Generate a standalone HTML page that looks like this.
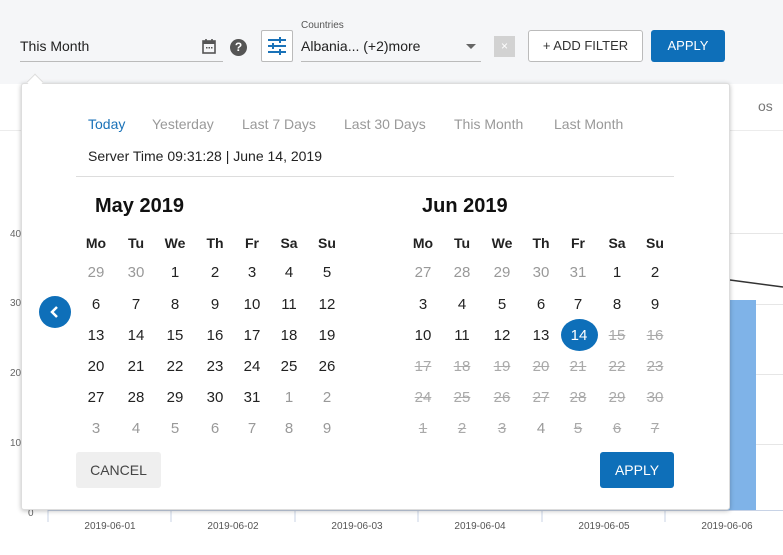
<!DOCTYPE html>
<html><head><style>
*{box-sizing:border-box;margin:0;padding:0}
body{width:783px;height:555px;overflow:hidden;background:#fff;font-family:"Liberation Sans",sans-serif;position:relative;color:#222}
.a{position:absolute}
.top{left:0;top:0;width:783px;height:84px;background:#f5f6f8}
.pop{left:21px;top:83px;width:709px;height:427px;background:#fff;border:1px solid #ddd;border-radius:3px;box-shadow:0 1px 5px rgba(0,0,0,.25)}
.d{position:absolute;width:36px;text-align:center;font-size:15px;transform:translateX(-18px);line-height:18px}
.g{color:#999}
.s{color:#aaa;text-decoration:line-through}
.h{font-weight:bold;font-size:14px}
.gl{position:absolute;height:1px;background:#e6e6e6}
.yl{position:absolute;font-size:10px;color:#666}
.xl{position:absolute;font-size:10px;color:#555;width:80px;text-align:center}
</style></head><body>
<div class="a top"></div>
<!-- chart background -->
<div class="gl" style="left:0;top:130px;width:783px;background:#ececec"></div>
<div class="gl" style="left:40px;top:233px;width:743px"></div>
<div class="gl" style="left:40px;top:304px;width:743px"></div>
<div class="gl" style="left:40px;top:374px;width:743px"></div>
<div class="gl" style="left:40px;top:444px;width:743px"></div>
<div class="yl" style="left:10px;top:229px">40</div>
<div class="yl" style="left:10px;top:298px">30</div>
<div class="yl" style="left:10px;top:368px">20</div>
<div class="yl" style="left:10px;top:438px">10</div>
<div class="yl" style="left:28px;top:508px">0</div>
<div class="a" style="left:758px;top:98px;font-size:14px;color:#777">os</div>
<div class="a" style="left:81px;top:500px;width:59px;height:10px;background:#6a9fd8"></div>
<div class="a" style="left:204px;top:500px;width:59px;height:10px;background:#6a9fd8"></div>
<div class="a" style="left:327px;top:500px;width:59px;height:10px;background:#6a9fd8"></div>
<div class="a" style="left:450px;top:500px;width:59px;height:10px;background:#6a9fd8"></div>
<div class="a" style="left:574px;top:500px;width:59px;height:10px;background:#6a9fd8"></div>
<div class="a" style="left:698px;top:300px;width:58px;height:210px;background:#7fb3e8"></div>
<div class="a" style="left:48px;top:510px;width:735px;height:1px;background:#c8d3e6"></div>
<svg class="a" style="left:0;top:0" width="783" height="555"><line x1="730" y1="280" x2="783" y2="287" stroke="#333" stroke-width="1.5"/>
<g stroke="#c8d3e6"><line x1="48" y1="510" x2="48" y2="522"/><line x1="171" y1="510" x2="171" y2="522"/><line x1="295" y1="510" x2="295" y2="522"/><line x1="418" y1="510" x2="418" y2="522"/><line x1="542" y1="510" x2="542" y2="522"/><line x1="665" y1="510" x2="665" y2="522"/></g></svg>
<div class="xl" style="left:70px;top:521px">2019-06-01</div>
<div class="xl" style="left:193px;top:521px">2019-06-02</div>
<div class="xl" style="left:317px;top:521px">2019-06-03</div>
<div class="xl" style="left:440px;top:521px">2019-06-04</div>
<div class="xl" style="left:564px;top:521px">2019-06-05</div>
<div class="xl" style="left:687px;top:521px">2019-06-06</div>

<!-- top bar -->
<div class="a" style="left:20px;top:38px;font-size:14px;color:#222">This Month</div>
<div class="a" style="left:20px;top:61px;width:203px;height:1px;background:#bbb"></div>
<svg class="a" style="left:201px;top:38px" width="16" height="17" viewBox="0 0 16 17"><rect x="2" y="3" width="12" height="12" fill="none" stroke="#555" stroke-width="1.6"/><rect x="2" y="3" width="12" height="3" fill="#555"/><line x1="5" y1="1" x2="5" y2="4" stroke="#555" stroke-width="1.6"/><line x1="11" y1="1" x2="11" y2="4" stroke="#555" stroke-width="1.6"/><rect x="5" y="9" width="1.5" height="1.5" fill="#555"/><rect x="7.5" y="9" width="1.5" height="1.5" fill="#555"/><rect x="10" y="9" width="1.5" height="1.5" fill="#555"/></svg>
<div class="a" style="left:230px;top:39px;width:17px;height:17px;border-radius:50%;background:#555;color:#fff;font-size:12px;font-weight:bold;text-align:center;line-height:17px">?</div>
<div class="a" style="left:261px;top:30px;width:32px;height:32px;border:1px solid #bbb;background:#fff;border-radius:2px"></div>
<svg class="a" style="left:267px;top:36px" width="20" height="20" viewBox="0 0 20 20" fill="#1a72b8"><rect x="1" y="3" width="18" height="2"/><rect x="12" y="1" width="2" height="6"/><rect x="1" y="9" width="18" height="2"/><rect x="5" y="7" width="2" height="6"/><rect x="1" y="15" width="18" height="2"/><rect x="12" y="13" width="2" height="6"/></svg>
<div class="a" style="left:301px;top:20px;font-size:10px;color:#555">Countries</div>
<div class="a" style="left:301px;top:38px;font-size:14px;color:#222">Albania... (+2)more</div>
<div class="a" style="left:466px;top:44px;width:0;height:0;border-left:5px solid transparent;border-right:5px solid transparent;border-top:5px solid #666"></div>
<div class="a" style="left:301px;top:61px;width:180px;height:1px;background:#bbb"></div>
<div class="a" style="left:494px;top:36px;width:21px;height:21px;background:#d2d2d2;color:#fff;font-size:12px;text-align:center;line-height:21px">×</div>
<div class="a" style="left:528px;top:30px;width:115px;height:32px;border:1px solid #bbb;border-radius:3px;background:#fff;font-size:13px;text-align:center;line-height:30px;color:#333">+ ADD FILTER</div>
<div class="a" style="left:651px;top:30px;width:74px;height:32px;background:#0e6fb9;border-radius:3px;color:#fff;font-size:13px;text-align:center;line-height:32px">APPLY</div>

<!-- popup -->
<div class="a pop"></div>
<div class="a" style="left:29px;top:76px;width:12px;height:12px;background:#fff;border-left:1px solid #ddd;border-top:1px solid #ddd;transform:rotate(45deg)"></div>
<div class="a" style="left:88px;top:116px;font-size:14px;color:#1a72b8">Today</div>
<div class="a" style="left:152px;top:116px;font-size:14px;color:#999">Yesterday</div>
<div class="a" style="left:242px;top:116px;font-size:14px;color:#999">Last 7 Days</div>
<div class="a" style="left:344px;top:116px;font-size:14px;color:#999">Last 30 Days</div>
<div class="a" style="left:454px;top:116px;font-size:14px;color:#999">This Month</div>
<div class="a" style="left:554px;top:116px;font-size:14px;color:#999">Last Month</div>
<div class="a" style="left:88px;top:148px;font-size:14px;color:#222">Server Time 09:31:28 | June 14, 2019</div>
<div class="a" style="left:76px;top:176px;width:598px;height:1px;background:#ddd"></div>
<div class="a" style="left:95px;top:195px;font-size:20px;font-weight:bold;color:#111">May 2019</div>
<div class="a" style="left:422px;top:195px;font-size:20px;font-weight:bold;color:#111">Jun 2019</div>
<div class="a" style="left:39px;top:296px;width:32px;height:32px;border-radius:50%;background:#0e6fb9"></div>
<svg class="a" style="left:47px;top:304px" width="16" height="16"><path d="M10 3 L5 8 L10 13" fill="none" stroke="#fff" stroke-width="2.5"/></svg>
<div class="a" style="left:561px;top:319px;width:37px;height:32px;border-radius:50%;background:#0e6fb9"></div>
<div id="cal"></div>
<div class="a" style="left:76px;top:452px;width:85px;height:36px;background:#efefef;border-radius:3px;color:#444;font-size:14px;text-align:center;line-height:36px">CANCEL</div>
<div class="a" style="left:600px;top:452px;width:74px;height:36px;background:#0e6fb9;border-radius:3px;color:#fff;font-size:14px;text-align:center;line-height:36px">APPLY</div>

<!-- May -->
<div class="d h" style="left:96px;top:234px">Mo</div><div class="d h" style="left:136px;top:234px">Tu</div><div class="d h" style="left:175px;top:234px">We</div><div class="d h" style="left:215px;top:234px">Th</div><div class="d h" style="left:252px;top:234px">Fr</div><div class="d h" style="left:289px;top:234px">Sa</div><div class="d h" style="left:327px;top:234px">Su</div>
<div class="d g" style="left:96px;top:264px">29</div><div class="d g" style="left:136px;top:264px">30</div><div class="d" style="left:175px;top:264px">1</div><div class="d" style="left:215px;top:264px">2</div><div class="d" style="left:252px;top:264px">3</div><div class="d" style="left:289px;top:264px">4</div><div class="d" style="left:327px;top:264px">5</div>
<div class="d" style="left:96px;top:296px">6</div><div class="d" style="left:136px;top:296px">7</div><div class="d" style="left:175px;top:296px">8</div><div class="d" style="left:215px;top:296px">9</div><div class="d" style="left:252px;top:296px">10</div><div class="d" style="left:289px;top:296px">11</div><div class="d" style="left:327px;top:296px">12</div>
<div class="d" style="left:96px;top:327px">13</div><div class="d" style="left:136px;top:327px">14</div><div class="d" style="left:175px;top:327px">15</div><div class="d" style="left:215px;top:327px">16</div><div class="d" style="left:252px;top:327px">17</div><div class="d" style="left:289px;top:327px">18</div><div class="d" style="left:327px;top:327px">19</div>
<div class="d" style="left:96px;top:358px">20</div><div class="d" style="left:136px;top:358px">21</div><div class="d" style="left:175px;top:358px">22</div><div class="d" style="left:215px;top:358px">23</div><div class="d" style="left:252px;top:358px">24</div><div class="d" style="left:289px;top:358px">25</div><div class="d" style="left:327px;top:358px">26</div>
<div class="d" style="left:96px;top:389px">27</div><div class="d" style="left:136px;top:389px">28</div><div class="d" style="left:175px;top:389px">29</div><div class="d" style="left:215px;top:389px">30</div><div class="d" style="left:252px;top:389px">31</div><div class="d g" style="left:289px;top:389px">1</div><div class="d g" style="left:327px;top:389px">2</div>
<div class="d g" style="left:96px;top:420px">3</div><div class="d g" style="left:136px;top:420px">4</div><div class="d g" style="left:175px;top:420px">5</div><div class="d g" style="left:215px;top:420px">6</div><div class="d g" style="left:252px;top:420px">7</div><div class="d g" style="left:289px;top:420px">8</div><div class="d g" style="left:327px;top:420px">9</div>
<!-- Jun -->
<div class="d h" style="left:423px;top:234px">Mo</div><div class="d h" style="left:462px;top:234px">Tu</div><div class="d h" style="left:502px;top:234px">We</div><div class="d h" style="left:541px;top:234px">Th</div><div class="d h" style="left:578px;top:234px">Fr</div><div class="d h" style="left:617px;top:234px">Sa</div><div class="d h" style="left:655px;top:234px">Su</div>
<div class="d g" style="left:423px;top:264px">27</div><div class="d g" style="left:462px;top:264px">28</div><div class="d g" style="left:502px;top:264px">29</div><div class="d g" style="left:541px;top:264px">30</div><div class="d g" style="left:578px;top:264px">31</div><div class="d" style="left:617px;top:264px">1</div><div class="d" style="left:655px;top:264px">2</div>
<div class="d" style="left:423px;top:296px">3</div><div class="d" style="left:462px;top:296px">4</div><div class="d" style="left:502px;top:296px">5</div><div class="d" style="left:541px;top:296px">6</div><div class="d" style="left:578px;top:296px">7</div><div class="d" style="left:617px;top:296px">8</div><div class="d" style="left:655px;top:296px">9</div>
<div class="d" style="left:423px;top:327px">10</div><div class="d" style="left:462px;top:327px">11</div><div class="d" style="left:502px;top:327px">12</div><div class="d" style="left:541px;top:327px">13</div><div class="d" style="left:579px;top:327px;color:#fff">14</div><div class="d s" style="left:617px;top:327px">15</div><div class="d s" style="left:655px;top:327px">16</div>
<div class="d s" style="left:423px;top:358px">17</div><div class="d s" style="left:462px;top:358px">18</div><div class="d s" style="left:502px;top:358px">19</div><div class="d s" style="left:541px;top:358px">20</div><div class="d s" style="left:578px;top:358px">21</div><div class="d s" style="left:617px;top:358px">22</div><div class="d s" style="left:655px;top:358px">23</div>
<div class="d s" style="left:423px;top:389px">24</div><div class="d s" style="left:462px;top:389px">25</div><div class="d s" style="left:502px;top:389px">26</div><div class="d s" style="left:541px;top:389px">27</div><div class="d s" style="left:578px;top:389px">28</div><div class="d s" style="left:617px;top:389px">29</div><div class="d s" style="left:655px;top:389px">30</div>
<div class="d s" style="left:423px;top:420px">1</div><div class="d s" style="left:462px;top:420px">2</div><div class="d s" style="left:502px;top:420px">3</div><div class="d g" style="left:541px;top:420px">4</div><div class="d s" style="left:578px;top:420px">5</div><div class="d s" style="left:617px;top:420px">6</div><div class="d s" style="left:655px;top:420px">7</div>
</body></html>
